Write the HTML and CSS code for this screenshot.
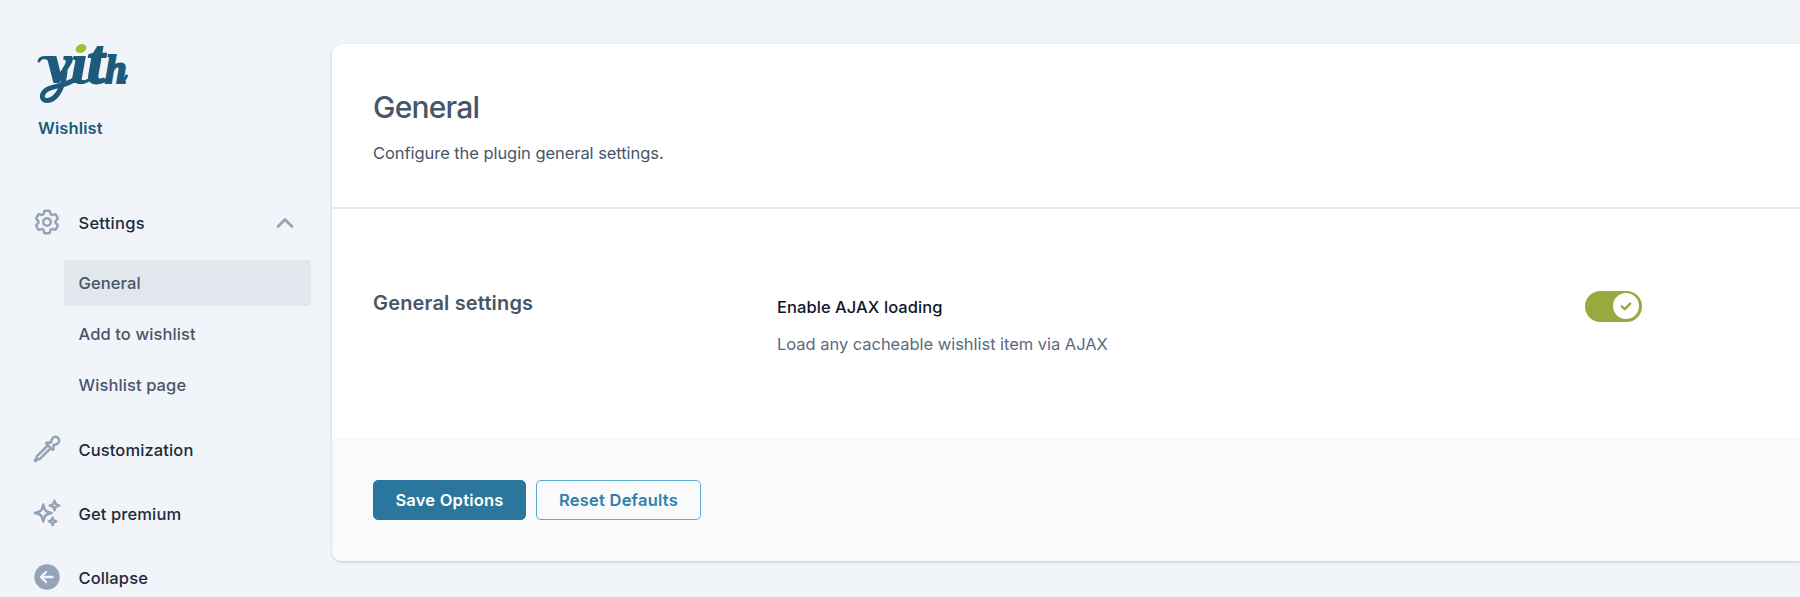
FILE: index.html
```html
<!DOCTYPE html>
<html lang="en">
<head>
<meta charset="utf-8">
<title>YITH Wishlist</title>
<link rel="stylesheet" href="styles.css">
</head>
<body>
<div class="app">
  <aside class="sidebar">
    <div class="brand">
      <svg class="logo" viewBox="0 0 92 64" role="img" aria-label="yith">
        <clipPath id="above-line"><path d="M0 0H92V64H40V41H0Z"/></clipPath>
        <text class="logo-text" y="41" clip-path="url(#above-line)"><tspan x="9" font-size="58">y</tspan><tspan x="34" font-size="58">ı</tspan><tspan x="50" font-size="63">t</tspan><tspan x="68" font-size="39">h</tspan></text>
        <path class="swash" d="M28 30C26 48 18 58.500 10 58.500C3 58.500 4 50 12 46.500C20 43 29 44 38 37"/>
        <path class="swash thin" d="M2 19C3 16 7 15 13 16M45 40Q51 40 55 35M64 40Q69 39 72 35M82 40Q87 40 89.500 34"/>
        <ellipse cx="44" cy="6.500" rx="5.500" ry="4.200" transform="rotate(-20 44 6.500)" fill="#9fc131"/>
      </svg>
      <div class="product">Wishlist</div>
    </div>
    <nav class="nav">
      <a class="item">
        <svg class="icon" viewBox="0 0 24 24"><path d="M9.594 3.940c.09-.542.56-.940 1.110-.940h2.593c.55 0 1.020.398 1.110.940l.213 1.281c.063.374.313.686.645.870.074.040.147.083.220.127.325.196.720.257 1.075.124l1.217-.456a1.125 1.125 0 0 1 1.370.490l1.296 2.247a1.125 1.125 0 0 1-.260 1.431l-1.003.827c-.293.241-.438.613-.430.992a7.723 7.723 0 0 1 0 .255c-.008.378.137.750.430.991l1.004.827c.424.350.534.955.260 1.430l-1.298 2.247a1.125 1.125 0 0 1-1.369.491l-1.217-.456c-.355-.133-.750-.072-1.076.124a6.470 6.470 0 0 1-.220.128c-.331.183-.581.495-.644.869l-.213 1.281c-.090.543-.560.940-1.110.940h-2.594c-.550 0-1.019-.398-1.110-.940l-.213-1.281c-.062-.374-.312-.686-.644-.870a6.520 6.520 0 0 1-.220-.127c-.325-.196-.720-.257-1.076-.124l-1.217.456a1.125 1.125 0 0 1-1.369-.490l-1.297-2.247a1.125 1.125 0 0 1 .260-1.431l1.004-.827c.292-.240.437-.613.430-.991a6.932 6.932 0 0 1 0-.255c.007-.380-.138-.751-.430-.992l-1.004-.827a1.125 1.125 0 0 1-.260-1.430l1.297-2.247a1.125 1.125 0 0 1 1.370-.491l1.216.456c.356.133.751.072 1.076-.124.072-.044.146-.086.220-.128.332-.183.582-.495.644-.869l.214-1.280Z"/><path d="M15 12a3 3 0 1 1-6 0 3 3 0 0 1 6 0Z"/></svg>
        <span class="wide">Settings</span>
        <svg class="chevron" viewBox="0 0 18 12"><path d="M2 9.500 9 2.500l7 7"/></svg>
      </a>
      <div class="submenu">
        <a class="sub active">General</a>
        <a class="sub">Add to wishlist</a>
        <a class="sub">Wishlist page</a>
      </div>
      <a class="item">
        <svg class="icon" viewBox="0 0 24 24"><path d="m15 11.250 1.500 1.500.750-.750V8.758l2.276-.610a3 3 0 1 0-3.675-3.675l-.610 2.277H12l-.750.750 1.500 1.500M15 11.250l-8.470 8.470c-.340.340-.800.530-1.280.530s-.940.190-1.280.530l-.970.970-.750-.750.970-.970c.340-.340.530-.800.530-1.280s.190-.940.530-1.280L12.750 9M15 11.250 12.750 9"/></svg>
        <span>Customization</span>
      </a>
      <a class="item">
        <svg class="icon" viewBox="0 0 24 24"><path d="M9.813 15.904 9 18.750l-.813-2.846a4.500 4.500 0 0 0-3.090-3.090L2.250 12l2.846-.813a4.500 4.500 0 0 0 3.090-3.090L9 5.250l.813 2.846a4.500 4.500 0 0 0 3.090 3.090L15.750 12l-2.846.813a4.500 4.500 0 0 0-3.090 3.090ZM18.259 8.715 18 9.750l-.259-1.035a3.375 3.375 0 0 0-2.455-2.456L14.250 6l1.036-.259a3.375 3.375 0 0 0 2.455-2.456L18 2.250l.259 1.035a3.375 3.375 0 0 0 2.456 2.456L21.750 6l-1.035.259a3.375 3.375 0 0 0-2.456 2.456ZM16.894 20.567 16.500 21.750l-.394-1.183a2.250 2.250 0 0 0-1.423-1.423L13.500 18.750l1.183-.394a2.250 2.250 0 0 0 1.423-1.423l.394-1.183.394 1.183a2.250 2.250 0 0 0 1.423 1.423l1.183.394-1.183.394a2.250 2.250 0 0 0-1.423 1.423Z"/></svg>
        <span>Get premium</span>
      </a>
      <a class="item">
        <svg class="icon" viewBox="0 0 30 30"><circle class="disc" cx="15" cy="15" r="12.700"/><path class="arrow" d="M20.500 15H9.500M14 10l-5 5 5 5"/></svg>
        <span>Collapse</span>
      </a>
    </nav>
  </aside>
  <main class="panel">
    <header class="head">
      <h1>General</h1>
      <p class="desc">Configure the plugin general settings.</p>
    </header>
    <section class="body">
      <h2>General settings</h2>
      <div class="option">
        <div class="label">Enable AJAX loading</div>
        <div class="hint">Load any cacheable wishlist item via AJAX</div>
      </div>
      <div class="toggle"><div class="knob"><svg viewBox="0 0 26 26"><path d="m8.800 13.300 2.900 2.900 5.500-5.600"/></svg></div></div>
    </section>
    <footer class="foot">
      <button class="btn save">Save Options</button>
      <button class="btn reset">Reset Defaults</button>
    </footer>
  </main>
</div>
</body>
</html>
```
FILE: styles.css
```css
* { box-sizing: border-box; }
body {
  margin: 0;
  height: 597px;
  overflow: hidden;
  background: #f1f5fa;
  font-family: Inter, "Liberation Sans", sans-serif;
  font-size: 16.5px;
  color: #475569;
}
.app { display: flex; height: 597px; }
.sidebar { width: 332px; flex: none; padding: 42px 21px 0 32px; }
.brand { padding-left: 5px; height: 149px; }
.logo { display: block; width: 92px; height: 64px; overflow: visible; }
.logo-text {
  font-family: "Liberation Serif", serif;
  font-weight: 700;
  font-style: italic;
  fill: #1d5a7c;
  stroke: #1d5a7c;
  stroke-width: 2;
}
.swash { fill: none; stroke: #1d5a7c; stroke-width: 5; stroke-linecap: round; }
.swash.thin { stroke-width: 3; }
.product {
  padding: 11px 0 0 1px;
  line-height: 22px;
  font-weight: 600;
  letter-spacing: .1px;
  color: #1d5a7c;
}
.nav { display: flex; flex-direction: column; }
.item {
  display: flex;
  align-items: center;
  height: 64px;
  color: #1e293b;
  font-weight: 500;
  letter-spacing: .12px;
}
.wide { letter-spacing: .25px; }
.icon {
  width: 30px;
  height: 30px;
  margin-right: 16.500px;
  margin-top: -2px;
  flex: none;
  fill: none;
  stroke: #94a3b8;
  stroke-width: 2;
  stroke-linecap: round;
  stroke-linejoin: round;
}
.icon .disc { fill: #94a3b8; stroke: none; }
.icon .arrow { stroke: #f1f5fa; stroke-width: 2.400; }
.chevron {
  width: 18px;
  height: 12px;
  margin: 0 17px 0 auto;
  fill: none;
  stroke: #94a3b8;
  stroke-width: 2.800;
  stroke-linecap: round;
  stroke-linejoin: round;
}
.submenu {
  display: flex;
  flex-direction: column;
  gap: 5px;
  padding: 5px 0 10px 32px;
}
.sub {
  height: 46px;
  line-height: 46px;
  padding-left: 14.500px;
  border-radius: 4px;
  font-weight: 500;
  letter-spacing: .1px;
}
.sub.active { background: #e2e7ee; }
.panel {
  flex: 1;
  height: 517px;
  margin-top: 44px;
  border-radius: 10px 0 0 10px;
  background: #fff;
  box-shadow: 0 1px 3px rgba(0, 0, 0, .18);
  overflow: hidden;
  display: flex;
  flex-direction: column;
}
.head { height: 165px; border-bottom: 2px solid #e6e9f0; padding: 43px 41px 0; }
h1 { margin: 0; font-size: 30px; line-height: 40px; font-weight: 500; letter-spacing: -.8px; }
.desc { margin: 15px 0 0; line-height: 22px; letter-spacing: -.06px; }
.body { height: 229px; display: flex; padding: 82px 0 0 41px; }
h2 { margin: -1px 0 0; width: 404px; font-size: 20px; line-height: 26px; font-weight: 600; letter-spacing: .16px; }
.option { width: 808px; }
.label { margin-top: 5px; line-height: 22px; font-weight: 500; letter-spacing: .06px; color: #0f172a; }
.hint { margin-top: 15px; line-height: 22px; letter-spacing: -.04px; color: #5b6a80; }
.toggle { width: 57px; height: 31px; border-radius: 16px; background: #98a93f; padding: 2px 3px; display: flex; justify-content: flex-end; }
.knob { width: 26px; height: 26px; border-radius: 50%; background: #fff; }
.knob svg { display: block; fill: none; stroke: #98a93f; stroke-width: 2.400; stroke-linecap: round; stroke-linejoin: round; }
.foot { flex: 1; background: #f8fafc; padding: 42px 41px 0; display: flex; gap: 10px; }
.btn { height: 40px; padding: 0; border-radius: 5px; font: 600 16.5px/38px Inter, sans-serif; letter-spacing: .22px; border: 1px solid #2a769c; }
.save { width: 153px; background: #2a769c; color: #fff; }
.reset { width: 165px; background: transparent; border-color: #5cabd0; color: #2e80ab; }
```
